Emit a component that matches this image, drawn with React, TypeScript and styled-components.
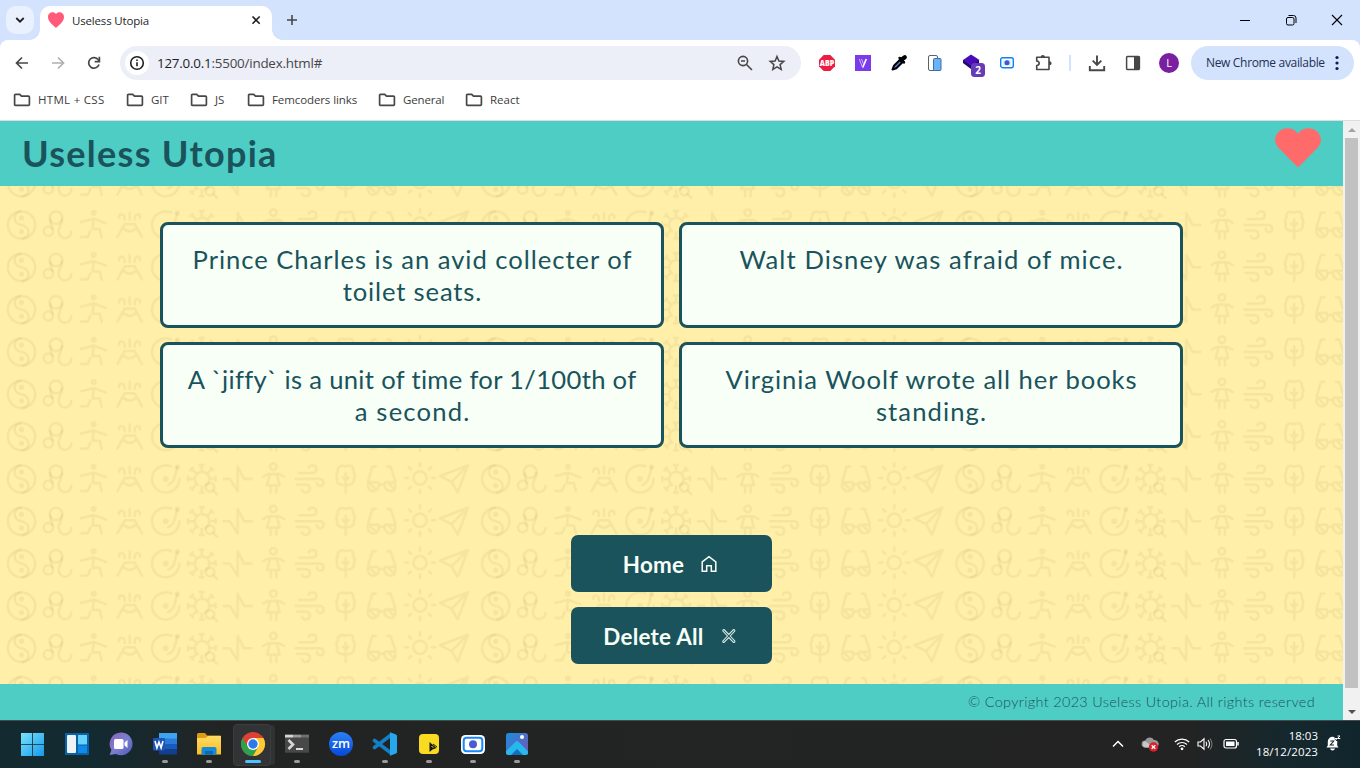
import React from "react";
import styled, { createGlobalStyle } from "styled-components";

const teal = "#4ecdc4";
const deep = "#1a535c";

const GlobalStyle = createGlobalStyle`
  * { box-sizing: border-box; }
  html, body { margin: 0; padding: 0; overflow: hidden; }
  svg { display: block; flex: none; }
`;

const Screen = styled.div`
  width: 1360px;
  height: 768px;
  display: flex;
  flex-direction: column;
  overflow: hidden;
  background: #d3e3fd;
  font-family: "Open Sans", "Noto Sans", sans-serif;
`;

const Label = styled.span<{ $size?: number; $track?: number; $color?: string }>`
  font-size: ${(p) => p.$size ?? 12}px;
  letter-spacing: ${(p) => p.$track ?? 0}px;
  color: ${(p) => p.$color ?? "#1f1f1f"};
  white-space: nowrap;
  line-height: 16px;
`;

const TabStrip = styled.div`
  height: 40px;
  flex: none;
  display: flex;
  align-items: flex-start;
  padding: 6px 0 0 6px;
`;

const TabSearch = styled.div`
  width: 28px;
  height: 28px;
  border-radius: 10px;
  background: #e9f1fe;
  display: grid;
  place-items: center;
`;

const Tab = styled.div`
  position: relative;
  width: 232px;
  height: 34px;
  margin-left: 6px;
  padding: 0 8px 6px;
  display: flex;
  align-items: center;
  background: #fff;
  border-radius: 10px 10px 0 0;

  &::before,
  &::after {
    content: "";
    position: absolute;
    bottom: 0;
    width: 10px;
    height: 10px;
  }
  &::before {
    left: -10px;
    background: radial-gradient(circle at 0 0, transparent 9.5px, #fff 10px);
  }
  &::after {
    right: -10px;
    background: radial-gradient(circle at 100% 0, transparent 9.5px, #fff 10px);
  }
`;

const TabTitle = styled(Label)`
  margin-left: 8px;
  padding-top: 1px;
  flex: 1;
`;

const NewTab = styled.div`
  width: 28px;
  height: 28px;
  margin-left: 6px;
  display: grid;
  place-items: center;
`;

const WindowControls = styled.div`
  margin-left: auto;
  display: flex;
`;

const WindowButton = styled.div`
  width: 46px;
  height: 28px;
  display: grid;
  place-items: center;
`;

const Chrome = styled.div`
  height: 81px;
  flex: none;
  display: flex;
  flex-direction: column;
  background: #fff;
  border-radius: 8px 8px 0 0;
  border-bottom: 1px solid #dcdcdc;
`;

const Toolbar = styled.div`
  height: 46px;
  padding: 0 6px 0 4px;
  display: flex;
  align-items: center;
`;

const Slot = styled.div<{ $w?: number }>`
  width: ${(p) => p.$w ?? 36}px;
  height: 34px;
  flex: none;
  display: grid;
  place-items: center;
`;

const Omnibox = styled.div`
  width: 681px;
  height: 34px;
  margin: 0 8px;
  padding: 0 8px 0 5px;
  border-radius: 17px;
  background: #eceef8;
  display: flex;
  align-items: center;
`;

const SiteInfo = styled.div`
  width: 24px;
  height: 24px;
  border-radius: 50%;
  background: #fff;
  display: grid;
  place-items: center;
`;

const Address = styled(Label)`
  margin-left: 8px;
  flex: 1;
  span {
    color: #474747;
  }
`;

const Divider = styled.div`
  width: 2px;
  height: 16px;
  background: #d3e3fd;
`;

const Avatar = styled.div`
  width: 20px;
  height: 20px;
  border-radius: 50%;
  background: #7b1fa2;
  color: #fff;
  font-size: 11px;
  line-height: 20px;
  text-align: center;
`;

const UpdatePill = styled.div`
  width: 163px;
  height: 34px;
  margin-left: 4px;
  padding: 0 15px;
  border-radius: 17px;
  background: #d3e3fd;
  display: flex;
  align-items: center;
  justify-content: space-between;
`;

const Bookmarks = styled.div`
  height: 28px;
  display: flex;
  align-items: center;
  padding-left: 13px;
`;

const Bookmark = styled.div<{ $w: number }>`
  width: ${(p) => p.$w}px;
  display: flex;
  align-items: center;
  gap: 7px;
`;

const Viewport = styled.div`
  height: 599px;
  flex: none;
  display: flex;
`;

const Page = styled.div`
  width: 1343px;
  display: flex;
  flex-direction: column;
  font-family: Lato, sans-serif;
`;

const Header = styled.header`
  height: 65px;
  flex: none;
  padding: 0 22px;
  display: flex;
  align-items: center;
  justify-content: space-between;
  background: ${teal};
`;

const Title = styled.h1`
  margin: 0;
  font-size: 36px;
  line-height: 45px;
  font-weight: 700;
  letter-spacing: 1.28px;
  color: ${deep};
`;

const HeartSlot = styled.div`
  height: 51px;
`;

const Main = styled.main`
  position: relative;
  height: 498px;
  flex: none;
  padding-top: 36px;
  display: flex;
  flex-direction: column;
  align-items: center;
  overflow: hidden;
  background: #ffefa8;
`;

const Wallpaper = styled.svg`
  position: absolute;
  inset: 0;
`;

const Cards = styled.section`
  position: relative;
  display: grid;
  grid-template-columns: 504px 504px;
  grid-auto-rows: 106px;
  gap: 14px 15px;
`;

const Card = styled.article`
  border: 3px solid ${deep};
  border-radius: 8px;
  background: #f7fff7;
  padding-top: 18px;
  display: flex;
  flex-direction: column;
  align-items: center;
  color: ${deep};
`;

const CardLine = styled.span<{ $track: number }>`
  font-size: 25.6px;
  line-height: 32px;
  white-space: nowrap;
  letter-spacing: ${(p) => p.$track}px;
  margin-right: -${(p) => p.$track}px;
`;

const Actions = styled.nav`
  position: relative;
  margin-top: 87px;
  display: grid;
  gap: 15px;
`;

const Action = styled.button`
  width: 201px;
  height: 57px;
  padding: 1px 2px 0 0;
  border: 0;
  border-radius: 7px;
  background: ${deep};
  color: #f7fff7;
  font: 700 22.4px/28px Lato, sans-serif;
  letter-spacing: 0.25px;
  display: flex;
  align-items: center;
  justify-content: center;
  gap: 16px;

  span {
    padding-top: 2px;
  }
`;

const Footer = styled.footer`
  height: 36px;
  flex: none;
  padding: 0 28px 1px 0;
  display: flex;
  align-items: center;
  justify-content: flex-end;
  background: ${teal};
  color: ${deep};
  font-size: 14.4px;
  font-weight: 300;
  letter-spacing: 0.36px;
  white-space: nowrap;
`;

const Scrollbar = styled.div`
  width: 17px;
  background: #f1f1f1;
  display: flex;
  flex-direction: column;
  align-items: center;
`;

const ScrollArrow = styled.div`
  height: 17px;
  display: grid;
  place-items: center;

  &:last-child {
    margin-top: auto;
  }
`;

const Thumb = styled.div`
  width: 13px;
  height: 550px;
  background: #c1c1c1;
`;

const Taskbar = styled.div`
  height: 48px;
  flex: none;
  padding-left: 11px;
  display: flex;
  border-top: 1px solid #454b4d;
  background: linear-gradient(90deg, #132a30 0, #132a30 100px, #222424 220px, #232323 1190px, #14282e 1290px, #11262c 1360px);
`;

const TaskItem = styled.div<{ $active?: boolean }>`
  width: 44px;
  height: 47px;
  display: flex;
  flex-direction: column;
  align-items: center;
  padding-top: 10px;
  position: relative;
  ${(p) =>
    p.$active &&
    `&::before { content: ""; position: absolute; left: 2px; top: 3px; width: 36px; height: 40px;
      border-radius: 4px; background: #323334; border: 1px solid #3c3d3e; box-shadow: 5px 0 0 -1px #303132; }`}
  svg { position: relative; }
`;

const Indicator = styled.i<{ $wide?: boolean }>`
  position: relative;
  width: ${(p) => (p.$wide ? 16 : 6)}px;
  height: 3px;
  margin-top: 3px;
  border-radius: 2px;
  background: ${(p) => (p.$wide ? "#4cc2ff" : "#999")};
`;

const Tray = styled.div`
  margin-left: auto;
  display: flex;
  align-items: center;
  padding: 0 12px 2px 0;
  color: #fff;
`;

const TraySlot = styled.div<{ $w: number }>`
  width: ${(p) => p.$w}px;
  display: grid;
  place-items: center;
`;

const Clock = styled.div`
  width: 70px;
  display: flex;
  flex-direction: column;
  align-items: flex-end;
`;

const stroke = (color: string, width: number) => ({
  fill: "none",
  stroke: color,
  strokeWidth: width,
});

const FolderIcon = () => (
  <svg width="18" height="16" viewBox="0 0 18 16">
    <path d="M1.600 3.200q0-.9.9-.9h4.200l1.800 1.900h7q.9 0 .9.900v7.300q0 .9-.9.900h-13q-.9 0-.9-.9z" {...stroke("#474747", 1.7)} />
  </svg>
);

const Favicon = () => (
  <svg width="16" height="16" viewBox="0 0 16 16">
    <path d="M8 16C7 14.300 0 10.500 0 4.900C0 .2 5.800-1.200 8 2C10.200-1.200 16 .2 16 4.900C16 10.500 9 14.300 8 16z" fill="#ff5a7a" />
  </svg>
);

const motifs = (
  <g fill="none" stroke="#a48a44" strokeOpacity=".115" strokeWidth="7.500" strokeLinecap="round" strokeLinejoin="round">
    <circle cx="64.500" cy="87" r="41" />
    <path d="M62 46C38 50 38 82 62 86C92 92 92 122 68 128" />
    <circle cx="64.500" cy="66" r="4" />
    <circle cx="64.500" cy="107" r="4" />
    <circle cx="168" cy="65" r="19" />
    <circle cx="145" cy="106" r="14" />
    <path d="M151 70Q151 87 158 98M186 70Q186 80 180 91Q171 108 182 121Q193 131 205 123Q213 118 214 107" />
    <circle cx="281" cy="50" r="5.500" />
    <path d="M243 78L281 68L318 82M281 68L278 99H299L305 124M271 105L263 123H243" />
    <path d="M352 123L374 84H404L426 123M362 103Q369 95 377 102Q389 110 401 102Q409 95 416 103M389 50V71M357 66Q356 55 365 55Q374 55 374 71M404 71Q404 55 412 55Q421 55 420 66" />
    <path d="M514 49C488 39 456 56 456 87C456 110 475 128 497 128C520 128 538 110 538 87M532 51L523 84Q520 99 504 105" />
    <circle cx="497" cy="87" r="5" />
    <circle cx="532" cy="51" r="4" />
    <path d="M616 107A22 22 0 1 0 593 105M605 64V45M599 45H611M622 70L636 57M632 53L640 61M589 70L575 57M570 61L578 53M582 87H564M564 81V93M628 86H647M647 80V92M589 103L576 117M571 113L579 121M605 109V128M599 128H611" />
    <circle cx="630" cy="112" r="13" />
    <path d="M640 122L651 133" />
    <path d="M671 87H690L713 124V50L732 87H755" />
    <circle cx="820" cy="50" r="10" />
    <path d="M789 80Q804 68 820 72Q838 68 852 80M809 76L801 106H839L831 76M812 107V128M829 107V128" />
    <path d="M897 69H938Q949 68 949 57Q949 46 937 46Q928 46 926 53M887 87H960Q971 88 971 98Q970 108 960 108Q951 107 951 98M891 104H920Q930 106 930 117Q928 128 917 128Q908 127 906 120" />
    <path d="M1037 128V70M1028 82L1037 91L1046 82M1023 104Q1007 100 1012 85Q1006 74 1013 65Q1012 49 1025 47Q1031 47 1037 50Q1047 44 1056 49Q1061 54 1060 65Q1068 75 1062 85Q1065 99 1049 104Q1036 108 1023 104" />
    <path d="M1128 50H1117L1104 94M1162 50H1172L1186 94M1137 106Q1145 99 1153 106M1106 97H1135Q1140 118 1125 123Q1110 126 1104 111Q1102 103 1106 97M1155 97H1184Q1190 113 1181 121Q1165 127 1155 113Q1152 104 1155 97M1111 101L1129 120M1165 99L1181 116" />
    <circle cx="1260" cy="84" r="20" />
    <path d="M1260 39V49M1260 119V130M1215 84H1224M1296 84H1306M1226 51L1233 58M1294 51L1287 58M1226 117L1233 111M1294 117L1287 111" />
    <path d="M1320 78L1404 46L1373 127L1355 95ZM1355 95L1404 46" />
  </g>
);

const cards: [string, number][][] = [
  [["Prince Charles is an avid collecter of", 0.97], ["toilet seats.", 0.85]],
  [["Walt Disney was afraid of mice.", 1.08]],
  [["A `jiffy` is a unit of time for 1/100th of", 0.32], ["a second.", 1.2]],
  [["Virginia Woolf wrote all her books", 0.94], ["standing.", 1.1]],
];

const folders: [string, number, number][] = [
  ["HTML + CSS", 113, 0.3],
  ["GIT", 64, 0],
  ["JS", 57, 0],
  ["Femcoders links", 131, -0.1],
  ["General", 87, -0.15],
  ["React", 80, 0],
];

const extensions = [
  <svg key="abp" width="18" height="18" viewBox="0 0 18 18">
    <path d="M5.700 1h6.600L17 5.700v6.600L12.300 17H5.700L1 12.300V5.700z" fill="#ee1c40" />
    <text x="9" y="12.200" textAnchor="middle" fontSize="8.500" fontWeight="800" fill="#fff" fontFamily="Open Sans" textLength="14.500" lengthAdjust="spacingAndGlyphs">ABP</text>
  </svg>,
  <svg key="v" width="16" height="16" viewBox="0 0 16 16">
    <path d="M0 0h16v16H0z" fill="#7c3aed" />
    <path d="M7.700 12.500L11.300 4" {...stroke("#fff", 1.7)} />
    <path d="M4.300 4l3.200 8.500M6.500 4l2 5" {...stroke("#cdb4f8", 1)} />
  </svg>,
  <svg key="pick" width="18" height="18" viewBox="0 0 18 18">
    <path d="M2.500 15.500L4 11.700L10 5.800L12.400 8.200L6.300 14.200z" fill="#5b7de0" stroke="#000" strokeWidth="2" strokeLinejoin="round" />
    <path d="M8.500 3.800L10 3L14.900 8L14 9.600z" fill="#000" stroke="#000" />
    <path d="M11 6L14.800 3.200" stroke="#000" strokeWidth="4.200" strokeLinecap="round" />
  </svg>,
  <svg key="resp" width="16" height="18" viewBox="0 0 16 18">
    <rect x="1.500" y="1.500" width="9" height="15" rx="1.500" fill="#fff" stroke="#59616e" />
    <rect x="6.500" y="4.500" width="7.500" height="12" rx="1" fill="#6cb2fb" stroke="#3a6fa8" />
  </svg>,
  <svg key="stack" width="28" height="28" viewBox="0 0 28 28">
    <path d="M6 14l8 6 8-6v-3H6z" fill="#1f0866" />
    <path d="M14 5.500L22.500 11L14 17L6 11z" fill="#4a0cb8" />
    <rect x="14" y="14" width="14" height="14" rx="3.500" fill="#673ab7" />
    <text x="21" y="24.800" textAnchor="middle" fontSize="10" fontWeight="700" fill="#fff" fontFamily="Open Sans">2</text>
  </svg>,
  <svg key="cam" width="16" height="14" viewBox="0 0 16 14">
    <rect x="1.700" y="1.700" width="12.600" height="10" rx="2" {...stroke("#0b80ff", 1.4)} />
    <path d="M4 4h8v5.500H4z" fill="#dcebff" />
    <circle cx="8" cy="6.800" r="2.500" fill="#4355c8" />
  </svg>,
  <svg key="puzzle" width="20" height="20" viewBox="0 0 20 20">
    <path d="M3.700 4.300H16v12.200H3.700V12.500Q6.200 12.300 6.200 10.300T3.700 8z" {...stroke("#474747", 1.600)} strokeLinejoin="round" />
    <path d="M7.800 4.500Q7.500 2 9.800 2T11.800 4.500zM16 8.300Q18.600 8 18.600 10.300T16 12.300z" fill="#474747" />
  </svg>,
];

const TaskButton = ({ children, dot = true, active = false }: { children: React.ReactNode; dot?: boolean; active?: boolean }) => (
  <TaskItem $active={active}>
    <svg width="26" height="26" viewBox="0 0 26 26">{children}</svg>
    {dot && <Indicator $wide={active} />}
  </TaskItem>
);

const TaskIcons = () => (
  <>
    <TaskButton dot={false}>
      <defs>
        <linearGradient id="win" x1="0" y1="0" x2="1" y2="1"><stop stopColor="#7be3fb" /><stop offset="1" stopColor="#1399ec" /></linearGradient>
        <linearGradient id="chat" x1="0" y1="0" x2="1" y2="1"><stop stopColor="#8d62b5" /><stop offset=".5" stopColor="#7b7fd0" /><stop offset="1" stopColor="#5055bd" /></linearGradient>
        <linearGradient id="fold" x1="0" y1="0" x2="0" y2="1"><stop stopColor="#ffdc63" /><stop offset="1" stopColor="#fbbc23" /></linearGradient>
        <linearGradient id="zoom" x1="0" y1="0" x2="0" y2="1"><stop stopColor="#2b80f8" /><stop offset="1" stopColor="#0648d8" /></linearGradient>
        <linearGradient id="photo" x1="0" y1="0" x2="1" y2="1"><stop stopColor="#1590dd" /><stop offset=".5" stopColor="#4c6fc7" /><stop offset="1" stopColor="#7655b3" /></linearGradient>
      </defs>
      <path d="M1 2h11v11H1zM12.800 2H24v11H12.800zM1 13.800h11V25H1zM12.800 13.800H24V25H12.800z" fill="url(#win)" />
    </TaskButton>
    <TaskButton dot={false}>
      <rect x="1" y="2" width="24" height="22" rx="1" fill="#0762a8" />
      <rect x="3" y="4" width="9" height="18" rx="1" fill="#eef2f5" />
      <path d="M14 4h9v9.500h-9z" fill="#67d2fb" />
      <path d="M14 14.500h9V22h-9z" fill="#1089ea" />
    </TaskButton>
    <TaskButton dot={false}>
      <path d="M13 1.500a11.400 11.400 0 1 1-5 21.600L1.700 24l1.700-5A11.400 11.400 0 0 1 13 1.500z" fill="url(#chat)" />
      <rect x="6" y="8" width="9.500" height="10" rx="1.500" fill="#fff" />
      <path d="M16.500 11.500l3-2.500v8l-3-2.500z" fill="#fff" />
    </TaskButton>
    <TaskButton>
      <path d="M7 2h18v6H7z" fill="#3fa4ef" />
      <path d="M7 7.500h18V13H7z" fill="#2b7cd8" />
      <path d="M7 13h18v5.500H7z" fill="#185abd" />
      <path d="M7 18.500h18v5H7z" fill="#123f8f" />
      <rect x="1" y="7" width="12" height="12.500" rx="1" fill="#1c55b5" />
      <path d="M3 10l1.900 6.800L7 11l2.100 5.800L11 10" {...stroke("#fff", 1.600)} />
    </TaskButton>
    <TaskButton>
      <path d="M1 3.500q0-1.500 1.500-1.500h6.500l2 2.500H24q1 0 1 1V9H1z" fill="#dd9c12" />
      <path d="M1 7h8.500l2.500-2H25v18.500H1z" fill="url(#fold)" />
      <path d="M5.500 23.500V18q0-2 2-2h11q2 0 2 2v5.500z" fill="#1689d8" />
      <path d="M9 23.500V20h8v3.500z" fill="#0969b3" />
    </TaskButton>
    <TaskButton active>
      <circle cx="13" cy="13" r="12" fill="#dc4133" />
      <path d="M2.600 7A12 12 0 0 0 13 25l5.200-9H7.800z" fill="#2ba24b" />
      <path d="M13 25A12 12 0 0 0 23.400 7H13l5.200 9z" fill="#fdcc35" />
      <circle cx="13" cy="13" r="6" fill="#fff" />
      <circle cx="13" cy="13" r="4.700" fill="#3077ea" />
    </TaskButton>
    <TaskButton>
      <rect x="1" y="3.700" width="24" height="18" fill="#484848" />
      <path d="M1 3.700h8V6.500H1z" fill="#d5d5d5" /><path d="M9 3.700h8v2.800H9z" fill="#999" /><path d="M17 3.700h8v2.800h-8z" fill="#707070" />
      <path d="M4.500 9l4.500 4.500L4.500 18" {...stroke("#d8d8d8", 2.600)} />
      <path d="M12 18h7" {...stroke("#fff", 1.600)} />
    </TaskButton>
    <TaskButton dot={false}>
      <circle cx="13" cy="13" r="12" fill="url(#zoom)" />
      <text x="13" y="16.700" textAnchor="middle" fontSize="13" fontWeight="600" fill="#fff" fontFamily="Open Sans" textLength="18" lengthAdjust="spacingAndGlyphs">zm</text>
    </TaskButton>
    <TaskButton>
      <path d="M2.500 9.500L19 22M2.500 16.500L19 4" {...stroke("#147fc5", 3.600)} strokeLinecap="round" />
      <path d="M18 1.200L24 3.600q1 .5 1 1.500v15.800q0 1-1 1.500L18 24.800z" fill="#27a8ee" />
    </TaskButton>
    <TaskButton>
      <rect x="3" y="3" width="20" height="20" rx="4" fill="#f9dc22" />
      <path d="M13.500 11v10l3-2.500 4-1.500z" fill="#161616" />
      <path d="M17 13l4 3" stroke="#161616" />
      <path d="M15.500 15.500l2 .8" stroke="#f9dc22" />
    </TaskButton>
    <TaskButton>
      <rect x="1" y="4" width="24" height="19" rx="4.500" fill="#fff" />
      <rect x="3.700" y="6.700" width="18.600" height="13.500" rx="3" {...stroke("#1888f8", 2)} />
      <circle cx="13" cy="13.300" r="4" fill="#505ad0" />
    </TaskButton>
    <TaskButton>
      <rect x="2" y="2" width="22" height="22" rx="2.500" fill="url(#photo)" />
      <path d="M2 20.300L11.500 10.800q1.500-1.400 3 0L24 20.300v1.200q0 2.500-2.500 2.500h-17Q2 24 2 21.300z" fill="#27b9ee" />
      <path d="M7 24l6-6 6 6z" fill="#126fbd" />
      <circle cx="18" cy="6" r="2" fill="#fff" />
    </TaskButton>
  </>
);

export default function App() {
  return (
    <Screen>
      <GlobalStyle />
      <TabStrip>
        <TabSearch>
          <svg width="10" height="8" viewBox="0 0 10 8"><path d="M1.300 2L5 5.700L8.700 2" {...stroke("#1f1f1f", 1.800)} /></svg>
        </TabSearch>
        <Tab>
          <Favicon />
          <TabTitle $size={11.5} $track={-0.17}>Useless Utopia</TabTitle>
          <svg width="16" height="16" viewBox="0 0 16 16"><path d="M4.500 4.500l7.200 7.200M11.700 4.500l-7.200 7.200" {...stroke("#1f1f1f", 1.600)} /></svg>
        </Tab>
        <NewTab>
          <svg width="12" height="12" viewBox="0 0 12 12"><path d="M6 1v10M1 6h10" {...stroke("#474747", 1.600)} /></svg>
        </NewTab>
        <WindowControls>
          <WindowButton><svg width="10" height="10" viewBox="0 0 10 10"><path d="M0 5.500h10" {...stroke("#000", 1)} /></svg></WindowButton>
          <WindowButton>
            <svg width="12" height="12" viewBox="0 0 12 12">
              <rect x="1.500" y="3.500" width="7.500" height="7.500" rx="1.500" {...stroke("#000", 1)} />
              <path d="M3.500 1.500h5Q11 1.500 11 4v5" {...stroke("#000", 1)} />
            </svg>
          </WindowButton>
          <WindowButton><svg width="12" height="12" viewBox="0 0 12 12"><path d="M1 1l10 10M11 1L1 11" {...stroke("#000", 1.100)} /></svg></WindowButton>
        </WindowControls>
      </TabStrip>

      <Chrome>
        <Toolbar>
          <Slot><svg width="14" height="14" viewBox="0 0 14 14"><path d="M13 7H2M7 1.500L1.500 7L7 12.500" {...stroke("#474747", 1.700)} /></svg></Slot>
          <Slot><svg width="14" height="14" viewBox="0 0 14 14"><path d="M1 7h11M7 1.500L12.500 7L7 12.500" {...stroke("#b0b0b0", 1.700)} /></svg></Slot>
          <Slot>
            <svg width="16" height="16" viewBox="0 0 16 16">
              <path d="M13 9.500A5.300 5.300 0 1 1 12.300 4.800L13.300 6" {...stroke("#474747", 1.700)} />
              <path d="M13.400 1.800V6.600H8.700" {...stroke("#474747", 1.700)} />
            </svg>
          </Slot>
          <Omnibox>
            <SiteInfo>
              <svg width="16" height="16" viewBox="0 0 16 16"><circle cx="8" cy="8" r="6.300" {...stroke("#1f1f1f", 1.600)} /><path d="M8 7.200v4M8 4.500v1.600" {...stroke("#1f1f1f", 1.600)} /></svg>
            </SiteInfo>
            <Address $size={13.4} $track={-0.22}>127.0.0.1<span>:5500/index.html#</span></Address>
            <Slot $w={32}>
              <svg width="18" height="18" viewBox="0 0 18 18"><circle cx="7" cy="7" r="4.600" {...stroke("#474747", 1.600)} /><path d="M10.500 10.500l5.500 5.500M5 7h4" {...stroke("#474747", 1.600)} /></svg>
            </Slot>
            <Slot $w={32}>
              <svg width="18" height="18" viewBox="0 0 18 18"><path d="M9 2.500l1.900 4.500 4.900.4-3.700 3.200 1.100 4.800L9 12.900l-4.200 2.500 1.100-4.800L2.200 7.400l4.900-.4z" {...stroke("#474747", 1.500)} /></svg>
            </Slot>
          </Omnibox>
          {extensions.map((icon, i) => <Slot key={i}>{icon}</Slot>)}
          <Slot $w={18}><Divider /></Slot>
          <Slot><svg width="18" height="18" viewBox="0 0 18 18"><path d="M9 1.500v9M4.700 6.700L9 11l4.300-4.300M1.800 12v4.200h14.400V12" {...stroke("#474747", 1.900)} /></svg></Slot>
          <Slot><svg width="18" height="18" viewBox="0 0 18 18"><rect x="2.600" y="2.600" width="12.800" height="12.800" rx=".8" {...stroke("#474747", 1.500)} /><path d="M10 2.500h5.500v13H10z" fill="#474747" /></svg></Slot>
          <Slot><Avatar>L</Avatar></Slot>
          <UpdatePill>
            <Label $size={12} $track={-0.33} $color="#1f2f55">New Chrome available</Label>
            <svg width="4" height="16" viewBox="0 0 4 16" fill="#0b1d4a"><circle cx="2" cy="2.500" r="1.600" /><circle cx="2" cy="8" r="1.600" /><circle cx="2" cy="13.500" r="1.600" /></svg>
          </UpdatePill>
        </Toolbar>
        <Bookmarks>
          {folders.map(([name, width, track]) => (
            <Bookmark key={name} $w={width}>
              <FolderIcon />
              <Label $size={11.5} $track={track} $color="#3c3c3c">{name}</Label>
            </Bookmark>
          ))}
        </Bookmarks>
      </Chrome>

      <Viewport>
        <Page>
          <Header>
            <Title>Useless Utopia</Title>
            <HeartSlot>
              <svg width="46" height="40" viewBox="0 0 46 40"><path d="M23 39.500L3.600 20C-1 15 -1 9 3 4.500C8-1 17-1 21.500 4L23 6L24.500 4C29-1 38-1 43 4.500C47 9 47 15 42.400 20z" fill="#ff6b6b" /></svg>
            </HeartSlot>
          </Header>
          <Main>
            <Wallpaper width="1343" height="498">
              <defs>
                <pattern id="motifs" x="0" y="18" width="474.300" height="42.330" patternUnits="userSpaceOnUse">
                  <g transform="scale(.33333) translate(0 -24)">{motifs}</g>
                </pattern>
              </defs>
              <rect width="1343" height="498" fill="url(#motifs)" />
            </Wallpaper>
            <Cards>
              {cards.map((lines, i) => (
                <Card key={i}>
                  {lines.map(([text, track]) => <CardLine key={text} $track={track}>{text}</CardLine>)}
                </Card>
              ))}
            </Cards>
            <Actions>
              <Action>
                <span>Home</span>
                <svg width="18" height="18" viewBox="0 0 18 18"><path d="M2.200 6.800L9 1.700L15.800 6.800V16.200H11.300V10.700H6.700V16.200H2.200z" {...stroke("#f7fff7", 1.500)} /></svg>
              </Action>
              <Action>
                <span>Delete All</span>
                <svg width="18" height="18" viewBox="0 0 18 18"><path d="M4 2.500L8.800 7.500L13.500 2.500Q15 2.300 14.800 4L10.200 9L14.800 14Q15 15.500 13.500 15.500L8.800 10.500L4 15.500Q2.500 15.500 2.900 14L7.500 9L2.900 4Q2.700 2.500 4 2.500z" {...stroke("#d7e8e5", 1.100)} /></svg>
              </Action>
            </Actions>
          </Main>
          <Footer>© Copyright 2023 Useless Utopia. All rights reserved</Footer>
        </Page>
        <Scrollbar>
          <ScrollArrow><svg width="8" height="4" viewBox="0 0 8 4"><path d="M0 4l4-4 4 4z" fill="#a3a3a3" /></svg></ScrollArrow>
          <Thumb />
          <ScrollArrow><svg width="8" height="4" viewBox="0 0 8 4"><path d="M0 0l4 4 4-4z" fill="#505050" /></svg></ScrollArrow>
        </Scrollbar>
      </Viewport>

      <Taskbar>
        <TaskIcons />
        <Tray>
          <TraySlot $w={30}><svg width="12" height="8" viewBox="0 0 12 8"><path d="M1 6.500l5-5 5 5" {...stroke("#fff", 1.500)} /></svg></TraySlot>
          <TraySlot $w={33}>
            <svg width="18" height="16" viewBox="0 0 18 16">
              <path d="M4 11.500a3.500 3.500 0 0 1 .2-7A5 5 0 0 1 13 4a4 4 0 0 1 2.500 7.500z" fill="#999" />
              <path d="M4 11.500a3.500 3.500 0 0 1 0-6.500L13 11.500z" fill="#c8c8c8" />
              <circle cx="12.500" cy="11" r="4.700" fill="#d9202c" />
              <path d="M10.700 9.200l3.600 3.600M14.300 9.200l-3.600 3.600" {...stroke("#fff", 1.300)} />
            </svg>
          </TraySlot>
          <TraySlot $w={31}>
            <svg width="16" height="14" viewBox="0 0 16 14"><path d="M.8 5a10.400 10.400 0 0 1 14.400 0M3 7.500a7.200 7.200 0 0 1 10 0M5.200 9.800a4 4 0 0 1 5.600 0" {...stroke("#fff", 1.200)} /><circle cx="8" cy="11.800" r="1.400" fill="#fff" /></svg>
          </TraySlot>
          <TraySlot $w={16}>
            <svg width="16" height="14" viewBox="0 0 16 14"><path d="M1 5h2.500L7 1.800v10.400L3.500 9H1z" {...stroke("#fff", 1.100)} /><path d="M9 4.800q1.500 2.200 0 4.400M11 3q3 4 0 8" {...stroke("#fff", 1.100)} /><path d="M13 1.500q4 5.500 0 11" {...stroke("#777", 1.100)} /></svg>
          </TraySlot>
          <TraySlot $w={35}>
            <svg width="16" height="12" viewBox="0 0 16 12"><rect x="1" y="1.500" width="12.500" height="8.500" rx="2" {...stroke("#fff", 1.200)} /><rect x="3" y="3.500" width="8.500" height="4.500" fill="#fff" /><path d="M15 4v3.500" {...stroke("#fff", 1.500)} /></svg>
          </TraySlot>
          <Clock>
            <Label $size={11.5} $track={0} $color="#fff">18:03</Label>
            <Label $size={11.5} $track={0.1} $color="#fff">18/12/2023</Label>
          </Clock>
          <TraySlot $w={30}>
            <svg width="16" height="17" viewBox="0 0 16 17">
              <path d="M1.500 12.500l1.300-2V6.500a4.700 4.700 0 0 1 9.400 0v4l1.300 2zM5 13.500h5q-.5 2-2.500 2T5 13.500z" fill="#fff" />
              <path d="M9.500 0h6v7h-3.500l-2.500-3z" fill="#12272d" />
              <path d="M5.300 6h3.500L5.300 10h3.700" {...stroke("#12272d", 1.100)} />
              <path d="M9.500 3.500h2.500L9.500 6.500h2.800M12.500 1h2.500l-2.500 2.500h2.800" {...stroke("#fff", 1)} />
            </svg>
          </TraySlot>
        </Tray>
      </Taskbar>
    </Screen>
  );
}
